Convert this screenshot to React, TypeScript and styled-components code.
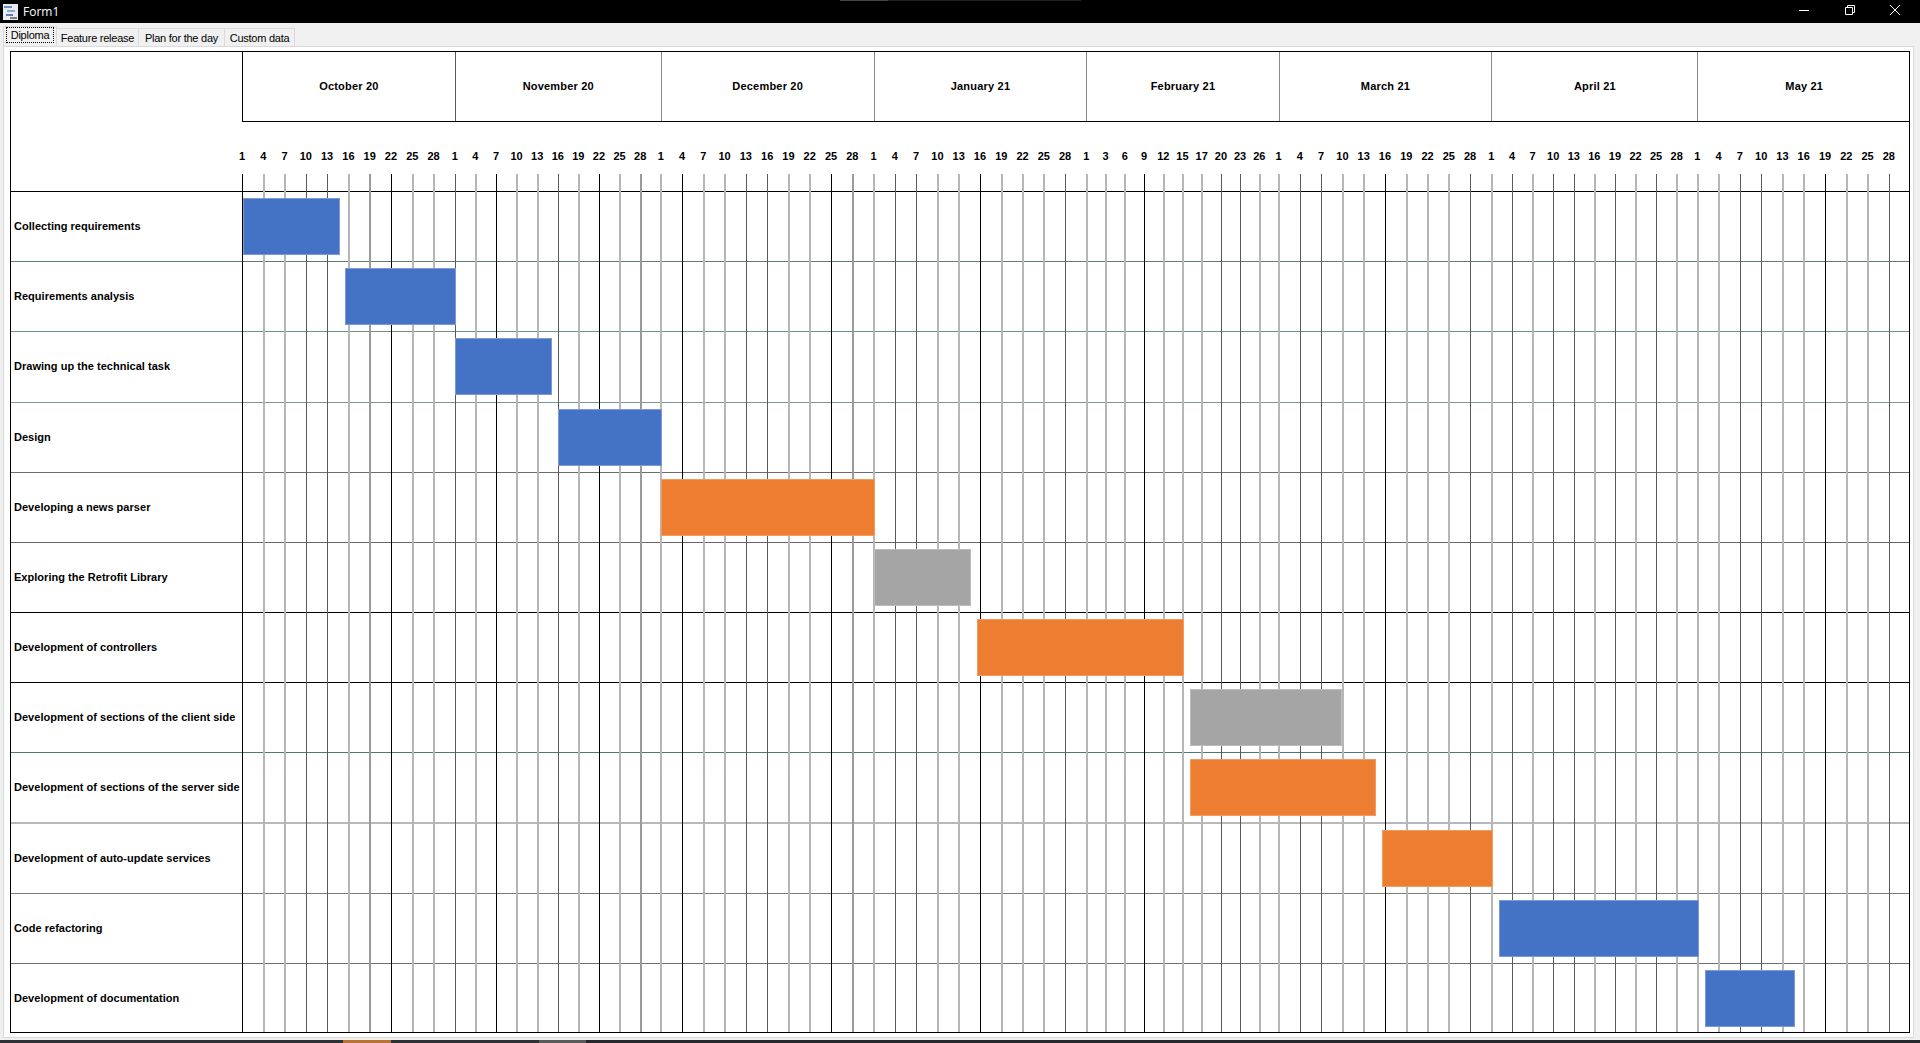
import React from "react";
import styled, { createGlobalStyle } from "styled-components";

const DAY = 6.865;
const ORIGIN = 242.5;
const LABEL_WIDTH = 231;
const TIMELINE_LEFT = 242;

interface Month {
    name: string;
    days: number[];
    length: number;
}

const regularDays = [1, 4, 7, 10, 13, 16, 19, 22, 25, 28];

const months: Month[] = [
    { name: "October 20", days: regularDays, length: 31 },
    { name: "November 20", days: regularDays, length: 30 },
    { name: "December 20", days: regularDays, length: 31 },
    { name: "January 21", days: regularDays, length: 31 },
    { name: "February 21", days: [1, 3, 6, 9, 12, 15, 17, 20, 23, 26], length: 28 },
    { name: "March 21", days: regularDays, length: 31 },
    { name: "April 21", days: regularDays, length: 30 },
    { name: "May 21", days: regularDays, length: 31 },
];

// how each tick came out in the picture: K black, D dark, M mid, L light
const tickTones = "KLLDDLMKLLDLKLLDLKLMLKLLDDLLKMLDDLLKLLLDLLLKLLLDDLLDDLLKLLLDLDLDDLDLDLLLDDLLKLLD";

const toneWidth: Record<string, number> = { K: 1, D: 1, M: 2, L: 2 };
const toneColor: Record<string, string> = { K: "#000000", D: "#5a5a5a", M: "#9a9a9a", L: "#b6b6b6" };

type BarKind = "blue" | "orange" | "gray";

const barColors: Record<BarKind, { fill: string; edge: string }> = {
    blue: { fill: "#4472c4", edge: "#7c9bd6" },
    orange: { fill: "#ed7d31", edge: "#f29a5f" },
    gray: { fill: "#a5a5a5", edge: "#bdbdbd" },
};

const tasks: { name: string; start: number; end: number; kind: BarKind; line: string; thick?: boolean }[] = [
    { name: "Collecting requirements", start: 0, end: 14, kind: "blue", line: "#5f7d7b" },
    { name: "Requirements analysis", start: 15, end: 31, kind: "blue", line: "#66918e" },
    { name: "Drawing up the technical task", start: 31, end: 45, kind: "blue", line: "#759b98" },
    { name: "Design", start: 46, end: 61, kind: "blue", line: "#6c6c6c" },
    { name: "Developing a news parser", start: 61, end: 92, kind: "orange", line: "#666666" },
    { name: "Exploring the Retrofit Library", start: 92, end: 106, kind: "gray", line: "#000000" },
    { name: "Development of controllers", start: 107, end: 137, kind: "orange", line: "#000000" },
    { name: "Development of sections of the client side", start: 138, end: 160, kind: "gray", line: "#4e7672" },
    { name: "Development of sections of the server side", start: 138, end: 165, kind: "orange", line: "#b8b8b8", thick: true },
    { name: "Development of auto-update services", start: 166, end: 182, kind: "orange", line: "#7c7c7c" },
    { name: "Code refactoring", start: 183, end: 212, kind: "blue", line: "#707070" },
    { name: "Development of documentation", start: 213, end: 226, kind: "blue", line: "transparent" },
];

const GlobalStyle = createGlobalStyle`
    html, body {
        margin: 0;
        padding: 0;
        background: #f0f0f0;
        overflow: hidden;
    }
    * {
        box-sizing: border-box;
    }
`;

const Window = styled.div`
    display: flex;
    flex-direction: column;
    width: 1920px;
    height: 1043px;
    font-family: "Liberation Sans", Arial, sans-serif;
    color: #000;
`;

const TitleBar = styled.div`
    position: relative;
    display: flex;
    flex: 0 0 23px;
    align-items: center;
    padding-left: 3px;
    background: #000;
`;

const TitleGlow = styled.div`
    position: absolute;
    left: 840px;
    top: 0;
    width: 241px;
    height: 1px;
    background: linear-gradient(to right, #444 0 20%, #222 20% 100%);
`;

const FormIcon = styled.svg`
    width: 15px;
    height: 16px;
    margin-right: 5px;
`;

const TitleText = styled.span`
    font-family: "Open Sans", "Liberation Sans", sans-serif;
    font-size: 12px;
    color: #fff;
`;

const WindowButtons = styled.div`
    display: flex;
    height: 100%;
    margin-left: auto;
    padding-right: 2px;
`;

const WindowButton = styled.div`
    display: flex;
    align-items: center;
    justify-content: center;
    width: 45.5px;
    padding-bottom: 3px;
`;

const TabStrip = styled.div`
    display: flex;
    flex: 0 0 23px;
    align-items: flex-end;
    padding-left: 3px;
`;

const Tab = styled.div<{ $active?: boolean }>`
    display: flex;
    align-items: center;
    justify-content: center;
    height: ${(p) => (p.$active ? 20 : 18)}px;
    border: 1px solid #dadada;
    border-bottom: none;
    border-left-width: ${(p) => (p.$active ? 1 : 0)}px;
    font-size: 11px;
    letter-spacing: -0.25px;
    white-space: nowrap;
`;

const FocusBox = styled.span`
    padding: 0 4px;
    line-height: 14px;
    outline: 1px dotted #000;
    margin-top: -3px;
`;

const Panel = styled.div`
    flex: 0 0 992px;
    width: 1911px;
    margin-left: 3px;
    padding: 4px 0 0 6px;
    background: #fff;
    border: 1px solid #dadada;
`;

const Chart = styled.div`
    position: relative;
    width: 1900px;
    height: 982px;
    border: 1px solid #000;
    overflow: hidden;
`;

const GridLines = styled.svg`
    position: absolute;
    left: 0;
    top: 122px;
    z-index: 0;
`;

const ChartHeader = styled.div`
    display: flex;
    height: 140px;
    border-bottom: 1px solid #000;
`;

const HeaderCorner = styled.div`
    flex: 0 0 ${LABEL_WIDTH}px;
`;

const HeaderTimeline = styled.div`
    display: flex;
    flex-direction: column;
    flex: 1;
    min-width: 0;
`;

const MonthRow = styled.div`
    display: flex;
    flex: 0 0 70px;
    border-bottom: 1px solid #000;
    border-left: 1px solid #000;
`;

const MonthCell = styled.div<{ $edge: string }>`
    display: flex;
    flex-shrink: 0;
    align-items: center;
    justify-content: center;
    padding-bottom: 2px;
    border-right: 1px solid ${(p) => p.$edge};
    font-size: 11px;
    font-weight: bold;
    letter-spacing: 0.2px;
`;

const DayRow = styled.div`
    display: flex;
    padding-top: 27px;
    font-size: 11px;
    font-weight: bold;
`;

const DayCell = styled.div`
    flex-shrink: 0;
    line-height: 14px;
`;

const DayText = styled.span`
    display: inline-block;
    transform: translateX(-50%);
`;

const TaskRow = styled.div<{ $line: string; $thick?: boolean }>`
    display: flex;
    height: 70.18px;
    border-bottom: ${(p) => (p.$thick ? 2 : 1)}px solid ${(p) => p.$line};
`;

const TaskName = styled.div`
    display: flex;
    flex: 0 0 ${LABEL_WIDTH}px;
    min-width: 0;
    align-items: center;
    padding: 0 0 1px 3px;
    font-size: 11px;
    font-weight: bold;
    letter-spacing: 0.03px;
    white-space: nowrap;
`;

const TaskTrack = styled.div`
    position: relative;
    flex: 1;
    padding-top: 6px;
`;

const TaskBar = styled.div<{ $kind: BarKind }>`
    position: relative;
    z-index: 1;
    height: 57px;
    background: ${(p) => barColors[p.$kind].fill};
    border: 1px solid ${(p) => barColors[p.$kind].edge};
`;

const Taskbar = styled.div`
    display: flex;
    flex: 0 0 3px;
    margin-top: 2px;
    background: #26272b;
`;

const TaskbarItem = styled.div<{ $width: number; $color: string }>`
    flex: 0 0 ${(p) => p.$width}px;
    background: ${(p) => p.$color};
`;

function buildTicks() {
    const ticks: { x: number; tone: string; month: number }[] = [];
    let start = ORIGIN;
    months.forEach((month, m) => {
        const step = (month.length * DAY) / 10;
        month.days.forEach((_, i) => {
            const tone = tickTones[ticks.length];
            const center = start + i * step;
            ticks.push({ x: Math.round(center - toneWidth[tone] / 2), tone, month: m });
        });
        start += month.length * DAY;
    });
    return ticks;
}

const ticks = buildTicks();

const App: React.FC = () => {
    const tabs = ["Feature release", "Plan for the day", "Custom data"];
    const tabWidths = [82, 86, 70];

    return (
        <Window>
            <GlobalStyle />
            <TitleBar>
                <TitleGlow />
                <FormIcon viewBox="0 0 15 16">
                    <rect width="15" height="16" fill="#e8ecf0" />
                    <rect x="1" y="2" width="8" height="2" fill="#6d8fc4" />
                    <rect x="4" y="6" width="8" height="2" fill="#8ea6cc" />
                    <rect x="3" y="10" width="7" height="2" fill="#5f7fb8" />
                    <rect x="7" y="13" width="7" height="2" fill="#7a7f88" />
                </FormIcon>
                <TitleText>Form1</TitleText>
                <WindowButtons>
                    <WindowButton>
                        <svg width="10" height="10" viewBox="0 0 10 10">
                            <path d="M0 5.5H10" stroke="#fff" strokeWidth="1" />
                        </svg>
                    </WindowButton>
                    <WindowButton>
                        <svg width="10" height="10" viewBox="0 0 10 10" fill="none">
                            <path d="M0.5 2.5H7.5V9.5H0.5Z M2.5 2.5V0.5H9.5V7.5H7.5" stroke="#fff" strokeWidth="1" />
                        </svg>
                    </WindowButton>
                    <WindowButton>
                        <svg width="10" height="10" viewBox="0 0 10 10">
                            <path d="M0 0L10 10M10 0L0 10" stroke="#fff" strokeWidth="1" />
                        </svg>
                    </WindowButton>
                </WindowButtons>
            </TitleBar>

            <TabStrip>
                <Tab $active style={{ width: 54 }}>
                    <FocusBox>Diploma</FocusBox>
                </Tab>
                {tabs.map((tab, i) => (
                    <Tab key={tab} style={{ width: tabWidths[i] }}>
                        {tab}
                    </Tab>
                ))}
            </TabStrip>

            <Panel>
                <Chart>
                    <GridLines width="1898" height="858">
                        {ticks.map((tick, i) => (
                            <rect
                                key={i}
                                x={tick.x - 11}
                                y="0"
                                width={toneWidth[tick.tone]}
                                height="858"
                                fill={toneColor[tick.tone]}
                            />
                        ))}
                    </GridLines>

                    <ChartHeader>
                        <HeaderCorner />
                        <HeaderTimeline>
                            <MonthRow>
                                {months.map((month, i) => (
                                    <MonthCell
                                        key={month.name}
                                        $edge={i === months.length - 1 ? "transparent" : i === 0 ? "#5a5a5a" : "#8a8a8a"}
                                        style={{ width: month.length * DAY }}
                                    >
                                        {month.name}
                                    </MonthCell>
                                ))}
                            </MonthRow>
                            <DayRow>
                                {months.map((month) =>
                                    month.days.map((day, i) => (
                                        <DayCell key={`${month.name}-${i}`} style={{ width: (month.length * DAY) / 10 }}>
                                            <DayText>{day}</DayText>
                                        </DayCell>
                                    ))
                                )}
                            </DayRow>
                        </HeaderTimeline>
                    </ChartHeader>

                    {tasks.map((task) => (
                        <TaskRow key={task.name} $line={task.line} $thick={task.thick}>
                            <TaskName>{task.name}</TaskName>
                            <TaskTrack>
                                <TaskBar
                                    $kind={task.kind}
                                    style={{
                                        marginLeft: ORIGIN - TIMELINE_LEFT + task.start * DAY,
                                        width: (task.end - task.start) * DAY + 1,
                                    }}
                                />
                            </TaskTrack>
                        </TaskRow>
                    ))}
                </Chart>
            </Panel>

            <Taskbar>
                <TaskbarItem $width={343} $color="#2f3033" />
                <TaskbarItem $width={48} $color="#b87333" />
                <TaskbarItem $width={148} $color="#2f3033" />
                <TaskbarItem $width={47} $color="#5a5a5a" />
            </Taskbar>
        </Window>
    );
};

export default App;
